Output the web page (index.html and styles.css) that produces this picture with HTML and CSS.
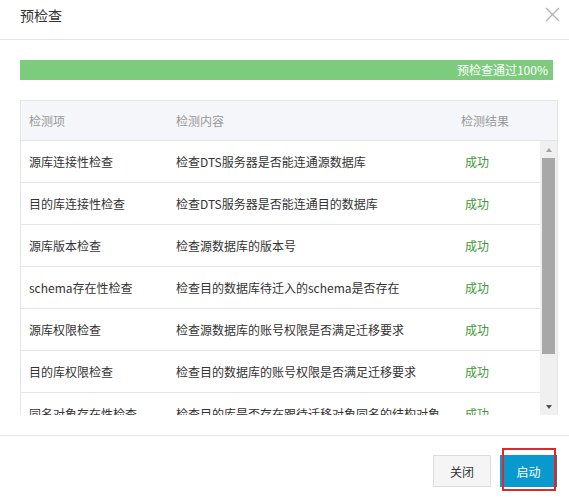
FILE: index.html
```html
<!DOCTYPE html>
<html lang="zh">
<head>
<meta charset="utf-8">
<title>预检查</title>
<link rel="stylesheet" href="styles.css">
</head>
<body>
<div class="dialog">
  <div class="dlg-header">
    <span class="dlg-title">预检查</span>
    <svg class="dlg-close" width="15" height="15" viewBox="0 0 15 15"><path d="M1 1 L14 14 M14 1 L1 14" stroke="#b4b4b4" stroke-width="1.3" fill="none"/></svg>
  </div>
  <div class="dlg-body">
    <div class="progress"><span class="progress-text">预检查通过100%</span></div>
    <div class="table">
      <div class="thead">
        <div class="th c1">检测项</div>
        <div class="th c2h">检测内容</div>
        <div class="th c3">检测结果</div>
      </div>
      <div class="tbody-wrap">
        <div class="tbody">
          <div class="tr"><div class="td c1">源库连接性检查</div><div class="td c2">检查DTS服务器是否能连通源数据库</div><div class="td c3 ok">成功</div></div>
          <div class="tr"><div class="td c1">目的库连接性检查</div><div class="td c2">检查DTS服务器是否能连通目的数据库</div><div class="td c3 ok">成功</div></div>
          <div class="tr"><div class="td c1">源库版本检查</div><div class="td c2">检查源数据库的版本号</div><div class="td c3 ok">成功</div></div>
          <div class="tr"><div class="td c1">schema存在性检查</div><div class="td c2">检查目的数据库待迁入的schema是否存在</div><div class="td c3 ok">成功</div></div>
          <div class="tr"><div class="td c1">源库权限检查</div><div class="td c2">检查源数据库的账号权限是否满足迁移要求</div><div class="td c3 ok">成功</div></div>
          <div class="tr"><div class="td c1">目的库权限检查</div><div class="td c2">检查目的数据库的账号权限是否满足迁移要求</div><div class="td c3 ok">成功</div></div>
          <div class="tr"><div class="td c1">同名对象存在性检查</div><div class="td c2">检查目的库是否存在跟待迁移对象同名的结构对象</div><div class="td c3 ok">成功</div></div>
          <div class="tr"><div class="td c1">源库binlog检查</div><div class="td c2">检查源数据库是否开启binlog</div><div class="td c3 ok">成功</div></div>
        </div>
        <div class="scrollbar">
          <div class="sb-btn"><span class="tri-up"></span></div>
          <div class="sb-track"><div class="sb-thumb"></div></div>
          <div class="sb-btn"><span class="tri-down"></span></div>
        </div>
      </div>
    </div>
  </div>
  <div class="dlg-footer">
    <button class="btn btn-default">关闭</button>
    <button class="btn btn-primary">启动</button>
  </div>
</div>
</body>
</html>
```

FILE: styles.css
```css
* { box-sizing: border-box; }
html, body { margin: 0; padding: 0; background: #fff; }
body {
  font-family: "Noto Sans CJK SC", "Microsoft YaHei", "Liberation Sans", sans-serif;
  font-size: 12px;
  color: #333;
}
.dialog { width: 569px; height: 501px; background: #fff; }
.dlg-header {
  height: 40px;
  border-bottom: 1px solid #e5e5e5;
  display: flex;
  justify-content: space-between;
  align-items: flex-start;
  padding: 5px 9px 0 20px;
}
.dlg-title { font-size: 14px; line-height: 20px; color: #333; }
.dlg-close { margin-top: 2px; }
.dlg-body { padding: 20px 12px 20px 20px; }
.progress {
  width: 533px;
  height: 20px;
  background: #7dcb7d;
  display: flex;
  justify-content: flex-end;
  align-items: center;
  padding-right: 5px;
  margin-bottom: 20px;
}
.progress-text { color: #fff; font-size: 12px; line-height: 20px; }
.table {
  width: 538px;
  border: 1px solid #e5e5e5;
  border-bottom: none;
}
.thead {
  height: 40px;
  background: #f5f6fa;
  border-bottom: 1px solid #e5e5e5;
  display: flex;
  align-items: center;
  color: #999;
}
.th, .td { padding-left: 8px; white-space: nowrap; overflow: hidden; }
.c1 { width: 147px; flex: none; }
.c2h { width: 285px; flex: none; }
.c2 { width: 289px; flex: none; }
.c3 { flex: 1; }
.tbody-wrap { display: flex; height: 274px; }
.tbody { flex: 1; overflow: hidden; }
.tr {
  height: 42px;
  border-bottom: 1px solid #e5e5e5;
  display: flex;
  align-items: center;
  color: #333;
}
.ok { color: #3d9b35; }
.scrollbar {
  width: 17px;
  flex: none;
  background: #f0f0f0;
  display: flex;
  flex-direction: column;
}
.sb-btn {
  height: 17px;
  display: flex;
  align-items: center;
  justify-content: center;
  flex: none;
}
.tri-up, .tri-down { width: 0; height: 0; border-left: 3.5px solid transparent; border-right: 3.5px solid transparent; }
.tri-up { border-bottom: 4px solid #a3a3a3; }
.tri-down { border-top: 4px solid #505050; }
.sb-track { flex: 1; padding: 0 2px; }
.sb-thumb { height: 196px; background: #a8a8a8; }
.dlg-footer {
  border-top: 1px solid #e5e5e5;
  padding: 19px 12px 0 0;
  display: flex;
  justify-content: flex-end;
  gap: 9px;
}
.btn {
  height: 32px;
  font-family: inherit;
  font-size: 12px;
  padding: 0;
  cursor: pointer;
}
.btn-default {
  width: 58px;
  background: #f5f5f5;
  border: 1px solid #ddd;
  color: #333;
}
.btn-primary {
  position: relative;
  width: 57px;
  background: #0a99cc;
  border: 1px solid #0a99cc;
  border-right-color: #3f6888;
  color: #fff;
}
.btn-primary::after {
  content: "";
  position: absolute;
  top: -8px;
  bottom: -5px;
  left: 1px;
  right: 0;
  border: 2px solid #e4252b;
}
```
